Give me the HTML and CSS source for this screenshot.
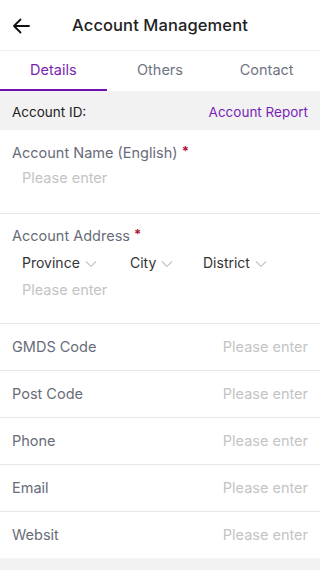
FILE: index.html
```html
<!DOCTYPE html>
<html>
<head>
<meta charset="utf-8">
<link rel="stylesheet" href="styles.css">
</head>
<body>
<div class="page">
  <header class="topbar">
    <svg class="back" width="20" height="20" viewBox="0 0 20 20"><path d="M18 10H3M9.5 3.5L3 10l6.5 6.5" fill="none" stroke="#111" stroke-width="1.8" stroke-linecap="round" stroke-linejoin="round"/></svg>
    <h1 class="title">Account Management</h1>
  </header>
  <nav class="tabs">
    <div class="tab active">Details</div>
    <div class="tab">Others</div>
    <div class="tab">Contact</div>
  </nav>
  <div class="idbar">
    <span class="idlabel">Account ID:</span>
    <span class="report">Account Report</span>
  </div>
  <section class="block">
    <div class="label">Account Name (English) <span class="req">*</span></div>
    <div class="ph indent">Please enter</div>
  </section>
  <section class="block">
    <div class="label">Account Address <span class="req">*</span></div>
    <div class="selects">
      <span class="sel sel-p">Province <svg class="chev" width="12" height="8" viewBox="0 0 12 8"><path d="M1 1.5l5 5 5-5" fill="none" stroke="#c4c4c4" stroke-width="1.1"/></svg></span>
      <span class="sel sel-c">City <svg class="chev" width="12" height="8" viewBox="0 0 12 8"><path d="M1 1.5l5 5 5-5" fill="none" stroke="#c4c4c4" stroke-width="1.1"/></svg></span>
      <span class="sel">District <svg class="chev" width="12" height="8" viewBox="0 0 12 8"><path d="M1 1.5l5 5 5-5" fill="none" stroke="#c4c4c4" stroke-width="1.1"/></svg></span>
    </div>
    <div class="ph indent">Please enter</div>
  </section>
  <div class="row"><span class="rlabel">GMDS Code</span><span class="ph">Please enter</span></div>
  <div class="row"><span class="rlabel">Post Code</span><span class="ph">Please enter</span></div>
  <div class="row"><span class="rlabel">Phone</span><span class="ph">Please enter</span></div>
  <div class="row"><span class="rlabel">Email</span><span class="ph">Please enter</span></div>
  <div class="row last"><span class="rlabel">Websit</span><span class="ph">Please enter</span></div>
  <div class="footer"></div>
</div>
</body>
</html>
```
FILE: styles.css
```css
* { box-sizing: border-box; margin: 0; padding: 0; }
html, body { width: 320px; height: 570px; overflow: hidden; }
body { font-family: "Inter", "Liberation Sans", sans-serif; background: #f2f2f2; color: #222; }
.page { background: #fff; }
.topbar { height: 51px; display: flex; align-items: center; justify-content: center; position: relative; border-bottom: 1px solid #f0f0f0; }
.back { position: absolute; left: 11px; top: 16px; }
.title { font-size: 16.5px; font-weight: 500; color: #222; letter-spacing: 0.1px; }
.tabs { display: flex; height: 40px; }
.tab { flex: 1; display: flex; align-items: center; justify-content: center; font-size: 14.5px; color: #6f7480; border-bottom: 2px solid transparent; padding-bottom: 2px; }
.tab.active { color: #7a1fb0; border-bottom-color: #7010b0; }
.idbar { height: 39px; background: #f2f2f2; display: flex; align-items: center; justify-content: space-between; padding: 2px 12px 0 12px; font-size: 13.5px; }
.idlabel { color: #222; }
.report { color: #7a1fb8; }
.block { padding: 11px 12px 0 12px; border-bottom: 1px solid #e8e8e8; }
.block:first-of-type { height: 84px; }
.block:nth-of-type(2) { height: 110px; padding-top: 10px; }
.label { font-size: 14.5px; color: #686c78; height: 20px; line-height: 20px; }
.req { color: #b0153a; font-weight: 700; font-size: 13px; vertical-align: 2px; }
.ph { color: #c4c4c4; font-size: 14.5px; }
.indent { padding-left: 10px; margin-top: 7px; line-height: 20px; }
.selects { display: flex; padding-left: 10px; margin-top: 9px; font-size: 14px; color: #333; line-height: 20px; }
.sel { display: inline-flex; align-items: center; gap: 5px; }
.sel-p { width: 108px; }
.sel-c { width: 73px; }
.chev { margin-top: 2px; }
.row { height: 47px; display: flex; align-items: center; justify-content: space-between; padding: 0 12px 2px; border-bottom: 1px solid #e8e8e8; }
.row.last { border-bottom: 1px solid #f6f6f6; }
.rlabel { font-size: 14.5px; color: #686c78; }
.footer { height: 12px; background: #f2f2f2; }
```
